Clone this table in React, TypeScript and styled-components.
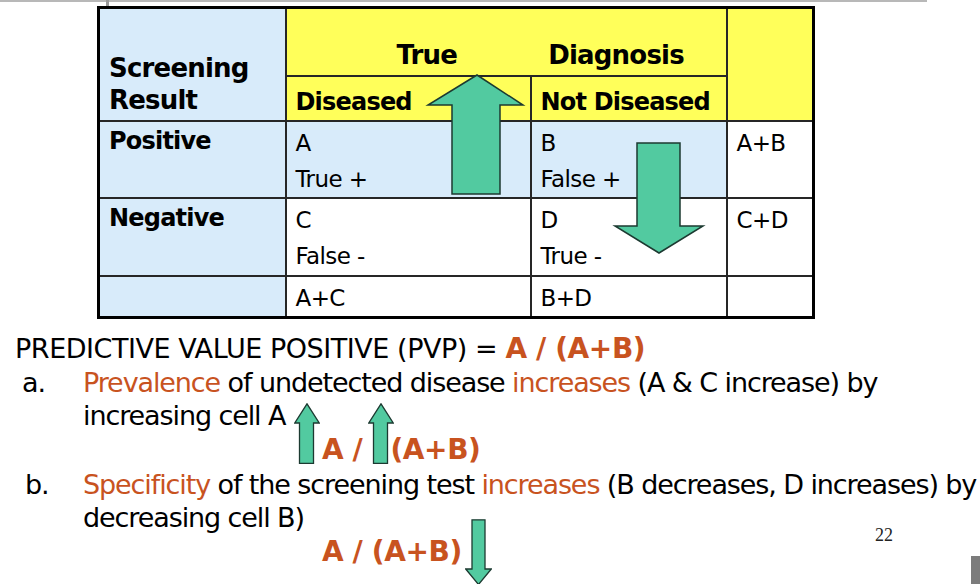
import React from 'react';
import styled, { createGlobalStyle } from 'styled-components';

const Global = createGlobalStyle`
  html, body { margin: 0; padding: 0; background: #fff; }
  body { font-family: "DejaVu Sans", Verdana, sans-serif; color: #000; }
`;

const ORANGE = '#c8531f';
const BLUE = '#d8ebfa';
const YELLOW = '#ffff5a';
const GREEN = '#52caa0';
const OUTLINE = '#1c3a31';

const Page = styled.div`
  position: relative;
  width: 980px;
  height: 584px;
  overflow: hidden;
  background: #fff;
`;

const TopRule = styled.div`
  width: 927px;
  height: 2px;
  background: #b8b8b8;
`;

const Tick = styled.div`
  position: absolute;
  left: 106px;
  top: 0;
  width: 3px;
  height: 6px;
  background: #9a9a9a;
`;

const TableWrap = styled.div`
  position: relative;
  margin: 4px 0 0 97px;
  width: 715px;
`;

const Table = styled.table`
  border-collapse: collapse;
  table-layout: fixed;
  width: 715px;
  border: 3px solid #000;
`;

const Row = styled.tr<{ $h: number }>`
  height: ${(p) => p.$h}px;
`;

type Fill = 'blue' | 'yellow' | 'white';

const Cell = styled.td<{ $fill: Fill; $va?: string; $pb?: number }>`
  border: 2px solid #262626;
  background: ${(p) => (p.$fill === 'blue' ? BLUE : p.$fill === 'yellow' ? YELLOW : '#fff')};
  vertical-align: ${(p) => p.$va || 'top'};
  padding: 3px 0 ${(p) => p.$pb ?? 0}px 9px;
  font-size: 23px;
  letter-spacing: -0.6px;
  line-height: 36px;
`;

const HeadText = styled.div<{ $size: number }>`
  font-weight: bold;
  font-size: ${(p) => p.$size}px;
  letter-spacing: -0.8px;
  line-height: 32px;
`;

const DiagnosisHead = styled.div`
  display: flex;
  gap: 91px;
  padding-left: 101px;
  font-weight: bold;
  font-size: 26px;
  letter-spacing: -0.8px;
  line-height: 32px;
`;

const Overlay = styled.svg`
  position: absolute;
  left: 0;
  top: 0;
  overflow: visible;
  pointer-events: none;
`;

const Notes = styled.div`
  padding: 13px 0 0 15px;
  font-size: 27px;
  letter-spacing: -1.1px;
  line-height: 33px;
  white-space: nowrap;
`;

const Heading = styled.div`
  line-height: 34px;
  letter-spacing: -0.45px;
`;

const Accent = styled.span<{ $bold?: boolean }>`
  color: ${ORANGE};
  font-weight: ${(p) => (p.$bold ? 'bold' : 'normal')};
  font-size: ${(p) => (p.$bold ? '28px' : 'inherit')};
  letter-spacing: ${(p) => (p.$bold ? '-0.4px' : 'inherit')};
`;

const Item = styled.div`
  display: grid;
  grid-template-columns: 68px 1fr;
`;

const Marker = styled.span<{ $indent: number }>`
  padding-left: ${(p) => p.$indent}px;
`;

const FormulaRow = styled.div<{ $indent: number; $align: string }>`
  display: flex;
  align-items: ${(p) => p.$align};
  height: 36px;
  padding-left: ${(p) => p.$indent}px;
  font-weight: bold;
  font-size: 28px;
  letter-spacing: -0.4px;
  line-height: 36px;
  color: ${ORANGE};
`;

const FormulaText = styled.span<{ $ml?: number }>`
  margin-left: ${(p) => p.$ml ?? 0}px;
`;

const ArrowSvg = styled.svg<{ $ml?: number; $mb?: number }>`
  flex: none;
  display: block;
  margin-left: ${(p) => p.$ml ?? 0}px;
  margin-bottom: ${(p) => p.$mb ?? 0}px;
`;

const PageNum = styled.div`
  position: absolute;
  left: 875px;
  top: 525px;
  font-family: "Liberation Serif", "Times New Roman", serif;
  font-size: 18px;
  color: #222;
`;

const PlayerTab = styled.div`
  position: absolute;
  left: 971px;
  top: 556px;
  width: 9px;
  height: 28px;
  background: #7c7c7c;
`;

const SmallUp: React.FC<{ ml?: number; mb?: number }> = ({ ml, mb }) => (
  <ArrowSvg width={26} height={61} viewBox="0 0 26 61" $ml={ml} $mb={mb}>
    <polygon
      points="5.5,60.5 5.5,20 0.8,20 13,0.8 25.2,20 19.5,20 19.5,60.5"
      fill={GREEN}
      stroke={OUTLINE}
      strokeWidth={1.3}
    />
  </ArrowSvg>
);

const SmallDown: React.FC<{ ml?: number }> = ({ ml }) => (
  <ArrowSvg width={27} height={66} viewBox="0 0 27 66" $ml={ml}>
    <polygon
      points="7,0.8 20,0.8 20,50 26.3,50 13.5,65.5 0.7,50 7,50"
      fill={GREEN}
      stroke={OUTLINE}
      strokeWidth={1.3}
    />
  </ArrowSvg>
);

export default function App() {
  return (
    <Page>
      <Global />
      <TopRule />
      <Tick />
      <TableWrap>
        <Table>
          <colgroup>
            <col style={{ width: 187 }} />
            <col style={{ width: 245 }} />
            <col style={{ width: 196 }} />
            <col style={{ width: 87 }} />
          </colgroup>
          <tbody>
            <Row $h={68}>
              <Cell $fill="blue" rowSpan={2} $va="bottom" $pb={4}>
                <HeadText $size={26}>
                  Screening
                  <br />
                  Result
                </HeadText>
              </Cell>
              <Cell $fill="yellow" colSpan={2} $va="bottom" $pb={4}>
                <DiagnosisHead>
                  <span>True</span>
                  <span>Diagnosis</span>
                </DiagnosisHead>
              </Cell>
              <Cell $fill="yellow" rowSpan={2} />
            </Row>
            <Row $h={45}>
              <Cell $fill="yellow" $va="bottom" $pb={2}>
                <HeadText $size={24}>Diseased</HeadText>
              </Cell>
              <Cell $fill="yellow" $va="bottom" $pb={2}>
                <HeadText $size={24}>Not Diseased</HeadText>
              </Cell>
            </Row>
            <Row $h={77}>
              <Cell $fill="blue">
                <HeadText $size={24}>Positive</HeadText>
              </Cell>
              <Cell $fill="blue">
                A
                <br />
                True +
              </Cell>
              <Cell $fill="blue">
                B
                <br />
                False +
              </Cell>
              <Cell $fill="white">A+B</Cell>
            </Row>
            <Row $h={78}>
              <Cell $fill="blue">
                <HeadText $size={24}>Negative</HeadText>
              </Cell>
              <Cell $fill="white">
                C
                <br />
                False -
              </Cell>
              <Cell $fill="white">
                D
                <br />
                True -
              </Cell>
              <Cell $fill="white">C+D</Cell>
            </Row>
            <Row $h={40}>
              <Cell $fill="blue" />
              <Cell $fill="white">A+C</Cell>
              <Cell $fill="white">B+D</Cell>
              <Cell $fill="white" />
            </Row>
          </tbody>
        </Table>
        <Overlay width={715} height={320} viewBox="0 0 715 320">
          <polygon
            points="355,188 355,99 331,99 380,69 426,99 403,99 403,188"
            fill={GREEN}
            stroke={OUTLINE}
            strokeWidth={1.5}
          />
          <polygon
            points="540,137 583,137 583,220 606,220 562,247 518,220 540,220"
            fill={GREEN}
            stroke={OUTLINE}
            strokeWidth={1.5}
          />
        </Overlay>
      </TableWrap>
      <Notes>
        <Heading>
          PREDICTIVE VALUE POSITIVE (PVP) = <Accent $bold>A / (A+B)</Accent>
        </Heading>
        <Item>
          <Marker $indent={7}>a.</Marker>
          <span>
            <Accent>Prevalence</Accent> of undetected disease <Accent>increases</Accent> (A &amp; C increase) by
            <br />
            increasing cell A
          </span>
        </Item>
        <FormulaRow $indent={279} $align="flex-end">
          <SmallUp mb={4} />
          <FormulaText $ml={2}>A /</FormulaText>
          <SmallUp ml={6} mb={4} />
          <FormulaText $ml={-4}>(A+B)</FormulaText>
        </FormulaRow>
        <Item>
          <Marker $indent={10}>b.</Marker>
          <span>
            <Accent>Specificity</Accent> of the screening test <Accent>increases</Accent> (B decreases, D increases) by
            <br />
            decreasing cell B)
          </span>
        </Item>
        <FormulaRow $indent={307} $align="center">
          <FormulaText>A / (A+B)</FormulaText>
          <SmallDown ml={3} />
        </FormulaRow>
      </Notes>
      <PageNum>22</PageNum>
      <PlayerTab />
    </Page>
  );
}
